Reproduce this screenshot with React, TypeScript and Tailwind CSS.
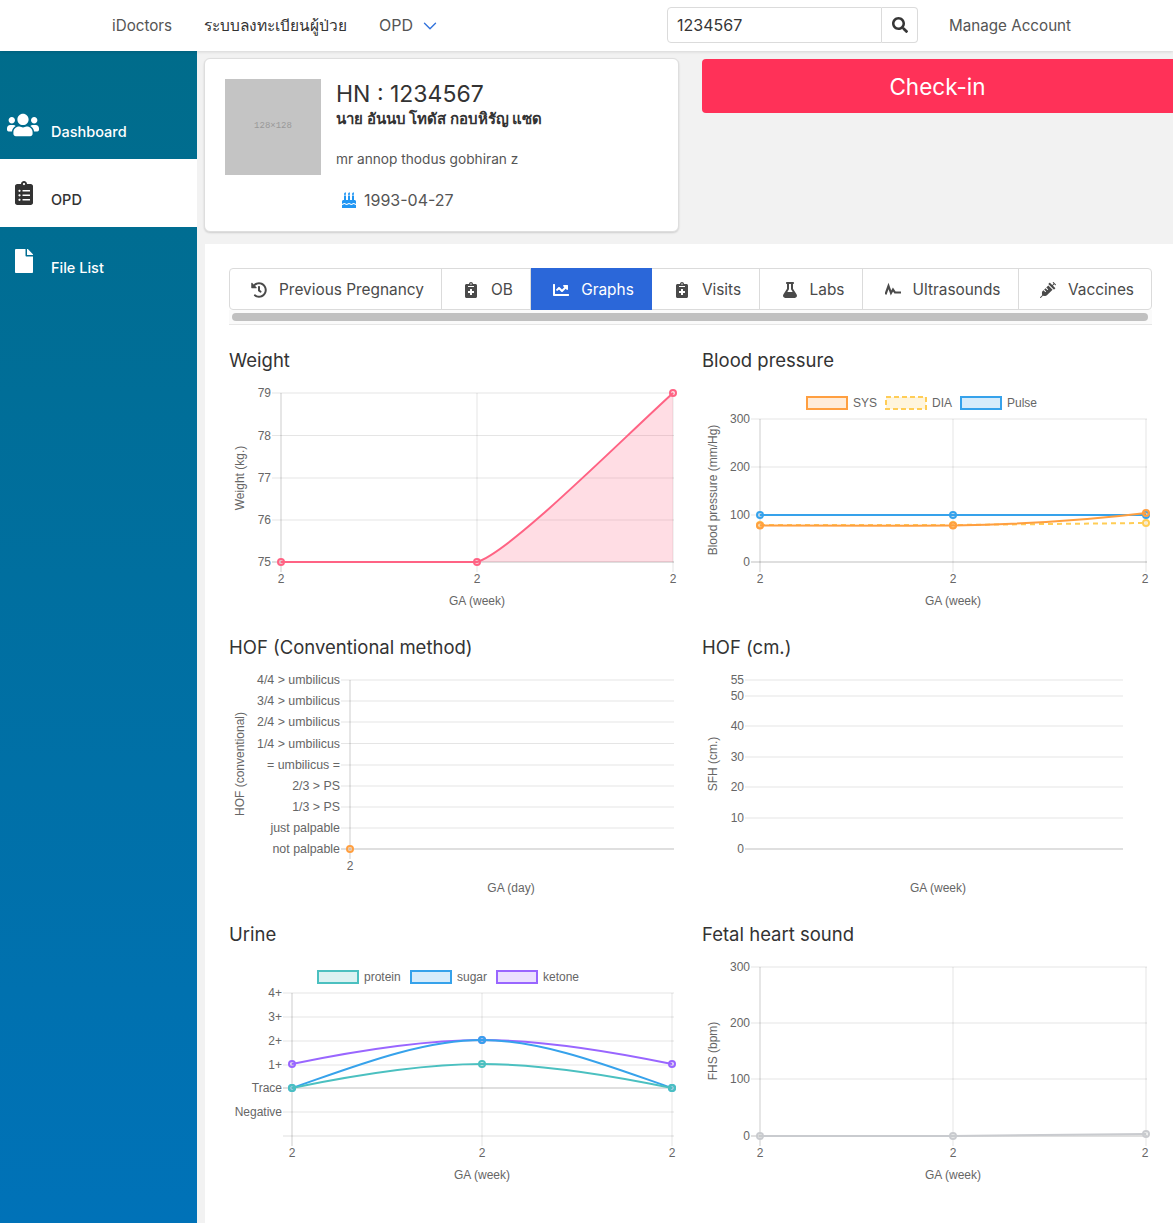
import type { ReactNode } from 'react';
import {
  FaBirthdayCake,
  FaChartLine,
  FaClipboardList,
  FaFile,
  FaFlask,
  FaHistory,
  FaNotesMedical,
  FaSearch,
  FaSyringe,
  FaUsers,
} from 'react-icons/fa';
import { ChevronDown } from 'lucide-react';

type Point = [number, number];

interface Series {
  color: string;
  d: string;
  points: Point[];
  fill?: string;
  dash?: boolean;
}

interface LegendItem {
  x: number;
  label: string;
  color: string;
  fill: string;
  dash?: boolean;
}

interface ChartProps {
  originX: number;
  originY: number;
  width: number;
  xs: number[];
  xLabels: number[];
  ys: { y: number; label: string }[];
  gridLeft: number;
  gridRight: number;
  labelRight: number;
  zeroY: number;
  yTitle: string;
  yTitleX: number;
  yTitleY: number;
  xTitle: string;
  xTitleX: number;
  xTitleY: number;
  xLabelY: number;
  series?: Series[];
  legend?: LegendItem[];
  legendY?: number;
  bottomY?: number;
  tickSize?: number;
}

function UltrasoundIcon() {
  return (
    <svg width="16" height="16" viewBox="0 0 16 16" fill="none" stroke="currentColor" strokeWidth="2.2">
      <path d="M0.5 12.5 L3.5 4 L6 11 L8 7.5 L10 10.5 L16 10.5" />
    </svg>
  );
}

function Chart(props: ChartProps) {
  const top = props.ys.reduce((m, t) => Math.min(m, t.y), 9999);
  const bottom = props.bottomY ?? props.zeroY;
  return (
    <svg
      width={props.width}
      height={252}
      viewBox={`${props.originX} ${props.originY} ${props.width} 252`}
      className="block font-['Liberation_Sans',sans-serif]"
    >
      {props.ys.map((t) => (
        <line
          key={t.label}
          x1={props.gridLeft}
          x2={props.gridRight}
          y1={t.y}
          y2={t.y}
          stroke={t.y === props.zeroY ? 'rgba(0,0,0,0.25)' : 'rgba(0,0,0,0.1)'}
        />
      ))}
      {props.bottomY && (
        <line x1={props.gridLeft} x2={props.gridRight} y1={bottom} y2={bottom} stroke="rgba(0,0,0,0.13)" />
      )}
      {props.xs.map((x, i) => (
        <line
          key={x}
          x1={x}
          x2={x}
          y1={top}
          y2={bottom + 10}
          stroke={i === 0 ? 'rgba(0,0,0,0.2)' : 'rgba(0,0,0,0.1)'}
        />
      ))}
      {props.ys.map((t) => (
        <text
          key={t.label}
          x={props.labelRight}
          y={t.y + 4}
          textAnchor="end"
          fontSize={props.tickSize ?? 12}
          fill="#666"
        >
          {t.label}
        </text>
      ))}
      {props.xLabels.map((x) => (
        <text key={x} x={x} y={props.xLabelY} textAnchor="middle" fontSize="12" fill="#666">
          2
        </text>
      ))}
      <text x={props.xTitleX} y={props.xTitleY} textAnchor="middle" fontSize="12" fill="#666">
        {props.xTitle}
      </text>
      <text
        x={props.yTitleX}
        y={props.yTitleY}
        textAnchor="middle"
        fontSize="12"
        fill="#666"
        transform={`rotate(-90 ${props.yTitleX} ${props.yTitleY})`}
      >
        {props.yTitle}
      </text>

      {props.legend?.map((l) => (
        <g key={l.label}>
          <rect
            x={l.x + 1}
            y={(props.legendY ?? 0) + 1}
            width={40}
            height={12}
            fill={l.fill}
            stroke={l.color}
            strokeWidth="2"
            strokeDasharray={l.dash ? '5 3' : undefined}
          />
          <text x={l.x + 47} y={(props.legendY ?? 0) + 11} fontSize="12" fill="#666">
            {l.label}
          </text>
        </g>
      ))}

      {props.series?.map((s) => (
        <g key={s.color + s.d}>
          {s.fill && <path d={`${s.d} L${s.points[s.points.length - 1][0]} ${bottom} Z`} fill={s.fill} stroke="none" />}
          <path d={s.d} fill="none" stroke={s.color} strokeWidth="2" strokeDasharray={s.dash ? '5 4' : undefined} />
          {s.points.map(([x, y]) => (
            <circle key={x} cx={x} cy={y} r="3" fill={s.color} fillOpacity="0.2" stroke={s.color} strokeWidth="2" />
          ))}
        </g>
      ))}
    </svg>
  );
}

const TABS = [
  { label: 'Previous Pregnancy', icon: <FaHistory size={16} />, w: 'w-[212px]' },
  { label: 'OB', icon: <FaNotesMedical size={16} />, w: 'w-[89px]' },
  { label: 'Graphs', icon: <FaChartLine size={16} />, w: 'w-[121px]', active: true },
  { label: 'Visits', icon: <FaNotesMedical size={16} />, w: 'w-[108px]' },
  { label: 'Labs', icon: <FaFlask size={16} />, w: 'w-[103px]' },
  { label: 'Ultrasounds', icon: <UltrasoundIcon />, w: 'w-[156px]' },
  { label: 'Vaccines', icon: <FaSyringe size={16} />, w: 'flex-1' },
];

const WEIGHT: ChartProps = {
  originX: 229, originY: 380, width: 473,
  xs: [281, 477, 673], xLabels: [281, 477, 673],
  ys: [
    { y: 393, label: '79' }, { y: 435.5, label: '78' }, { y: 478, label: '77' },
    { y: 520, label: '76' }, { y: 562, label: '75' },
  ],
  gridLeft: 272, gridRight: 674, labelRight: 271, zeroY: 562,
  yTitle: 'Weight (kg.)', yTitleX: 244, yTitleY: 478,
  xTitle: 'GA (week)', xTitleX: 477, xTitleY: 605, xLabelY: 583,
  series: [
    {
      color: '#ff6384',
      fill: 'rgba(255,99,132,0.22)',
      d: 'M281 562 L477 562 C510 552 615 446 673 393',
      points: [[281, 562], [477, 562], [673, 393]],
    },
  ],
};

const BP: ChartProps = {
  originX: 702, originY: 380, width: 471,
  xs: [760, 953, 1146], xLabels: [760, 953, 1145],
  ys: [
    { y: 419, label: '300' }, { y: 467, label: '200' }, { y: 515, label: '100' }, { y: 562, label: '0' },
  ],
  gridLeft: 751, gridRight: 1147, labelRight: 750, zeroY: 562,
  yTitle: 'Blood pressure (mm/Hg)', yTitleX: 717, yTitleY: 490,
  xTitle: 'GA (week)', xTitleX: 953, xTitleY: 605, xLabelY: 583,
  legendY: 396,
  legend: [
    { x: 806, label: 'SYS', color: '#ff9f40', fill: 'rgba(255,159,64,0.2)' },
    { x: 885, label: 'DIA', color: '#ffcd56', fill: 'rgba(255,205,86,0.2)', dash: true },
    { x: 960, label: 'Pulse', color: '#36a2eb', fill: 'rgba(54,162,235,0.2)' },
  ],
  series: [
    { color: '#36a2eb', d: 'M760 515 L1146 515', points: [[760, 515], [953, 515], [1146, 515]] },
    {
      color: '#ffcd56', dash: true,
      d: 'M760 525 L953 525 L1146 523',
      points: [[760, 525], [953, 525], [1146, 523]],
    },
    {
      color: '#ff9f40',
      d: 'M760 525.5 C830 526 890 526 953 525.5 C1030 524 1090 520 1146 513',
      points: [[760, 525.5], [953, 525.5], [1146, 513]],
    },
  ],
};

const HOF: ChartProps = {
  originX: 229, originY: 667, width: 473,
  xs: [350], xLabels: [350],
  ys: [
    { y: 680, label: '4/4 > umbilicus' }, { y: 701, label: '3/4 > umbilicus' },
    { y: 722, label: '2/4 > umbilicus' }, { y: 743.5, label: '1/4 > umbilicus' },
    { y: 765, label: '= umbilicus =' }, { y: 786, label: '2/3 > PS' },
    { y: 807, label: '1/3 > PS' }, { y: 828, label: 'just palpable' },
    { y: 849, label: 'not palpable' },
  ],
  gridLeft: 341, gridRight: 674, labelRight: 340, zeroY: 849, tickSize: 12.4,
  yTitle: 'HOF (conventional)', yTitleX: 244, yTitleY: 764,
  xTitle: 'GA (day)', xTitleX: 511, xTitleY: 892, xLabelY: 870,
  series: [{ color: '#ff9f40', d: 'M350 849 L350 849', points: [[350, 849]] }],
};

const HOF_CM: ChartProps = {
  originX: 702, originY: 667, width: 471,
  xs: [], xLabels: [],
  ys: [
    { y: 680, label: '55' }, { y: 696, label: '50' }, { y: 726, label: '40' }, { y: 757, label: '30' },
    { y: 787, label: '20' }, { y: 818, label: '10' }, { y: 849, label: '0' },
  ],
  gridLeft: 745, gridRight: 1123, labelRight: 744, zeroY: 849,
  yTitle: 'SFH (cm.)', yTitleX: 717, yTitleY: 764,
  xTitle: 'GA (week)', xTitleX: 938, xTitleY: 892, xLabelY: 870,
};

const URINE: ChartProps = {
  originX: 229, originY: 954, width: 473,
  xs: [292, 482, 672], xLabels: [292, 482, 672],
  ys: [
    { y: 993, label: '4+' }, { y: 1017, label: '3+' }, { y: 1041, label: '2+' }, { y: 1065, label: '1+' },
    { y: 1088, label: 'Trace' }, { y: 1112, label: 'Negative' },
  ],
  gridLeft: 283, gridRight: 674, labelRight: 282, zeroY: 1088, bottomY: 1136,
  yTitle: '', yTitleX: 244, yTitleY: 1060,
  xTitle: 'GA (week)', xTitleX: 482, xTitleY: 1179, xLabelY: 1157,
  legendY: 970,
  legend: [
    { x: 317, label: 'protein', color: '#4bc0c0', fill: 'rgba(75,192,192,0.2)' },
    { x: 410, label: 'sugar', color: '#36a2eb', fill: 'rgba(54,162,235,0.2)' },
    { x: 496, label: 'ketone', color: '#9966ff', fill: 'rgba(153,102,255,0.2)' },
  ],
  series: [
    {
      color: '#9966ff',
      d: 'M292 1064 C350 1052 420 1040 482 1040 C544 1040 614 1052 672 1064',
      points: [[292, 1064], [482, 1040], [672, 1064]],
    },
    {
      color: '#36a2eb',
      d: 'M292 1088 C350 1068 420 1040 482 1040 C544 1040 614 1068 672 1088',
      points: [[292, 1088], [482, 1040], [672, 1088]],
    },
    {
      color: '#4bc0c0',
      d: 'M292 1088 C350 1076 420 1064 482 1064 C544 1064 614 1076 672 1088',
      points: [[292, 1088], [482, 1064], [672, 1088]],
    },
  ],
};

const FHS: ChartProps = {
  originX: 702, originY: 954, width: 471,
  xs: [760, 953, 1146], xLabels: [760, 953, 1145],
  ys: [
    { y: 967, label: '300' }, { y: 1023, label: '200' }, { y: 1079, label: '100' }, { y: 1136, label: '0' },
  ],
  gridLeft: 751, gridRight: 1147, labelRight: 750, zeroY: 1136,
  yTitle: 'FHS (bpm)', yTitleX: 717, yTitleY: 1051,
  xTitle: 'GA (week)', xTitleX: 953, xTitleY: 1179, xLabelY: 1157,
  series: [
    {
      color: '#c9cbcf',
      d: 'M760 1136 L953 1136 L1146 1134',
      points: [[760, 1136], [953, 1136], [1146, 1134]],
    },
  ],
};

const SECTIONS = [
  { title: 'Weight', chart: WEIGHT },
  { title: 'Blood pressure', chart: BP },
  { title: 'HOF (Conventional method)', chart: HOF },
  { title: 'HOF (cm.)', chart: HOF_CM },
  { title: 'Urine', chart: URINE },
  { title: 'Fetal heart sound', chart: FHS },
];

function SideItem({ icon, label, active, tall }: { icon: ReactNode; label: string; active?: boolean; tall?: boolean }) {
  return (
    <div
      className={`flex items-end text-[14.5px] font-medium ${tall ? 'h-[108px]' : 'h-[68px]'} ${
        active ? 'bg-white text-[#333]' : 'text-white'
      }`}
    >
      <div className={`flex w-[51px] justify-center self-end ${tall ? 'pb-[18px] pr-[5px]' : 'pb-[22px] pr-[3px]'}`}>{icon}</div>
      <span className="pb-[17px] leading-5">{label}</span>
    </div>
  );
}

export default function App() {
  return (
    <div className="flex h-[1223px] w-[1173px] flex-col overflow-hidden bg-[#f2f2f2] font-['Inter','Noto_Sans',sans-serif] text-[#333]">
      {/* Top nav */}
      <nav className="z-10 flex h-[51px] shrink-0 items-center bg-white pl-[112px] text-[15.2px] text-[#555] shadow-[0_1px_3px_rgba(0,0,0,0.12)]">
        <span className="mt-[1px] w-[60px]">iDoctors</span>
        <span className="ml-[32px] w-[143px] whitespace-nowrap text-[15.5px] font-medium text-[#333]">ระบบลงทะเบียนผู้ป่วย</span>
        <span className="mb-[1px] ml-[32px] w-[33px] text-[16px]">OPD</span>
        <ChevronDown size={22} strokeWidth={1.5} className="ml-[7px] text-[#3273dc]" />
        <div className="mb-[1px] ml-[226px] flex h-[36px]">
          <div className="flex w-[215px] items-center rounded-l border border-[#dbdbdb] px-[9px] text-[16px] text-[#363636]">1234567</div>
          <div className="flex w-[36px] items-center justify-center rounded-r border border-l-0 border-[#dbdbdb] text-[#363636]">
            <FaSearch size={16} />
          </div>
        </div>
        <span className="ml-[31px] mt-[1px]">Manage Account</span>
      </nav>

      <div className="flex flex-1">
        {/* Sidebar */}
        <aside className="w-[197px] shrink-0 bg-gradient-to-b from-[#006c8b] to-[#0072b8]">
          <SideItem tall label="Dashboard" icon={<FaUsers size={32} />} />
          <SideItem active label="OPD" icon={<FaClipboardList size={24} />} />
          <SideItem label="File List" icon={<FaFile size={24} />} />
        </aside>

        <main className="flex min-w-0 flex-1 flex-col pl-[8px] pt-[8px]">
          <div className="flex">
            {/* Patient card */}
            <div className="-ml-[1px] -mt-[1px] flex h-[174px] w-[475px] rounded-md border border-[#dedede] bg-white pl-[20px] pt-[20px] shadow-[0_1px_2px_rgba(0,0,0,0.15)]">
              <div className="flex h-[96px] w-[96px] items-center justify-center bg-[#c4c4c4] font-['Liberation_Mono',monospace] text-[9px] text-[#999]">
                128×128
              </div>
              <div className="ml-[15px]">
                <div className="mt-[1px] text-[23px] leading-[28px]">HN : 1234567</div>
                <div className="mt-[1px] text-[15px] font-bold leading-[20px]">นาย อันนบ โทดัส กอบหิรัญ แซด</div>
                <div className="mt-[20px] text-[13.7px] leading-[20px] text-[#555]">mr annop thodus gobhiran z</div>
                <div className="ml-[5px] mt-[19px] flex items-center text-[16px] leading-[24px] text-[#555]">
                  <FaBirthdayCake size={16} className="text-[#2196f3]" />
                  <span className="ml-[7px]">1993-04-27</span>
                </div>
              </div>
            </div>
            <div className="ml-[23px] flex h-[54px] flex-1 items-center justify-center rounded-l bg-[#ff3158] pt-[2px] text-[22.5px] text-white">
              Check-in
            </div>
          </div>

          {/* Panel */}
          <section className="mt-[12px] flex-1 bg-white pl-[24px] pt-[24px]">
            <div className="w-[923px]">
              <div className="flex h-[42px] rounded border border-[#dbdbdb] text-[15.4px] text-[#4a4a4a]">
                {TABS.map((t) => (
                  <div
                    key={t.label}
                    className={`flex items-center justify-center gap-[12px] border-r border-[#dbdbdb] pl-[4px] pt-[1px] last:border-r-0 ${t.w} ${
                      t.active ? 'mt-[-1px] h-[42px] border-r-0 bg-[#2b67d9] text-white' : ''
                    }`}
                  >
                    {t.icon}
                    <span>{t.label}</span>
                  </div>
                ))}
              </div>
              <div className="flex h-[15px] items-center border-b border-[#e6e6e6] bg-[#fafafa] pl-[3px] pr-[4px]">
                <div className="h-[8px] w-full rounded bg-[#c0c0c0]" />
              </div>
            </div>

            <div className="mt-[20px] grid grid-cols-[473px_471px]">
              {SECTIONS.map((s) => (
                <div key={s.title} className="h-[287px]">
                  <h3 className="text-[18.5px] font-normal leading-[30px] text-[#333]">{s.title}</h3>
                  <div className="mt-[5px]">
                    <Chart {...s.chart} />
                  </div>
                </div>
              ))}
            </div>
          </section>
        </main>
      </div>
    </div>
  );
}
